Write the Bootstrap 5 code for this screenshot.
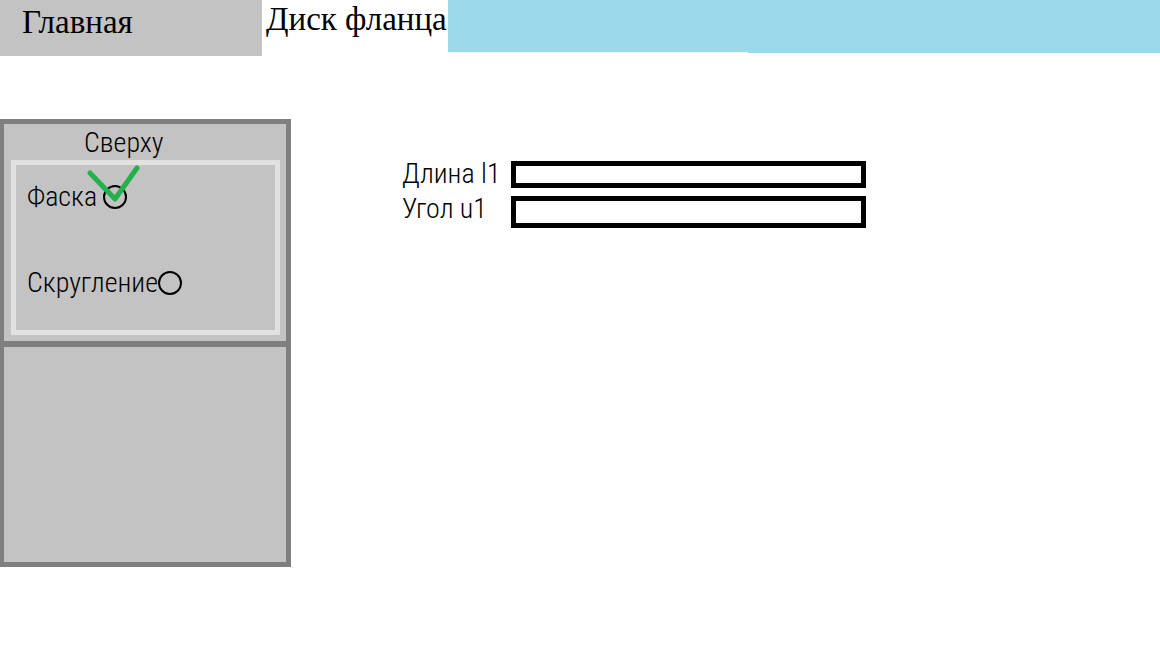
<!DOCTYPE html>
<html lang="ru">
<head>
<meta charset="utf-8">
<meta name="viewport" content="width=device-width, initial-scale=1">
<title>Диск фланца</title>
<link href="https://cdn.jsdelivr.net/npm/bootstrap@5.3.0/dist/css/bootstrap.min.css" rel="stylesheet">
<style>
  body { background: #fff; color: #000; font-family: "Roboto Condensed", "Liberation Sans Narrow", Roboto, sans-serif; font-size: 28px; font-weight: 300; line-height: 34px; }
  .topbar { height: 56px; font-family: "Liberation Serif", serif; font-size: 33px; font-weight: 400; line-height: 38px; }
  .topbar a { color: #000; text-decoration: none; white-space: nowrap; }
  .tab-home { width: 262px; padding: 3px 0 0 22px; background: #c3c3c3; }
  .tab-disk { width: 186px; padding-left: 4px; }
  .strip { background: #99d9ea; height: 53px; }
  .strip-start { width: 300px; height: 52px; }
  .workspace { margin-top: 63px; }
  .side { width: 291px; border: 5px solid #7f7f7f; border-left-width: 4px; background: #c3c3c3; }
  .side-top { height: 223px; padding: 2px 6px 6px 7px; border-bottom: 6px solid #7f7f7f; }
  .side-bottom { height: 215px; }
  .side-title { font-size: 28px; font-weight: 300; line-height: 34px; padding-left: 73px; margin: 0; }
  .options { height: 175px; border: 5px solid #e1e1e1; padding: 15px 0 0 11px; }
  .option { height: 34px; }
  .option label { min-width: 76px; }
  .option + .option { margin-top: 52px; }
  .ring { appearance: none; width: 24px; height: 24px; margin: 0; border: 2px solid #000; border-radius: 50%; background: transparent; }
  .tick { left: 59px; top: -17px; width: 54px; height: 40px; pointer-events: none; }
  .fields { margin: 42px 0 0 111px; gap: 8px; }
  .field-label { width: 109px; line-height: 26px; }
  .field-box { width: 355px; height: 27px; border: 5px solid #000; border-radius: 0; background: #fff; padding: 0 6px; font-size: 16px; line-height: 16px; }
  .field-box.tall { height: 32px; }
</style>
</head>
<body>
<nav class="topbar d-flex align-items-start">
  <a class="tab-home h-100" href="#home">Главная</a>
  <a class="tab-disk h-100" href="#disk" aria-current="page">Диск фланца</a>
  <div class="strip strip-start"></div>
  <div class="strip flex-grow-1"></div>
</nav>
<div class="workspace d-flex align-items-start">
  <aside class="side flex-shrink-0">
    <section class="side-top">
      <h2 class="side-title" id="side-title">Сверху</h2>
      <div class="options" role="radiogroup" aria-labelledby="side-title">
        <div class="option d-flex align-items-center position-relative">
          <label for="chamfer">Фаска</label>
          <input class="ring" type="radio" name="edge" id="chamfer" checked>
          <svg class="tick position-absolute" viewBox="0 0 54 40" aria-hidden="true"><path d="M4 10 29 36 51 5" fill="none" stroke="#22b14c" stroke-width="5" stroke-linecap="round" stroke-linejoin="round"/></svg>
        </div>
        <div class="option d-flex align-items-center">
          <label for="fillet">Скругление</label>
          <input class="ring" type="radio" name="edge" id="fillet">
        </div>
      </div>
    </section>
    <section class="side-bottom"></section>
  </aside>
  <form class="fields d-flex flex-column">
    <div class="d-flex align-items-start">
      <label class="field-label" for="length">Длина l1</label>
      <input class="field-box" type="text" id="length">
    </div>
    <div class="d-flex align-items-start">
      <label class="field-label" for="angle">Угол u1</label>
      <input class="field-box tall" type="text" id="angle">
    </div>
  </form>
</div>
<script src="https://cdn.jsdelivr.net/npm/bootstrap@5.3.0/dist/js/bootstrap.bundle.min.js"></script>
</body>
</html>
